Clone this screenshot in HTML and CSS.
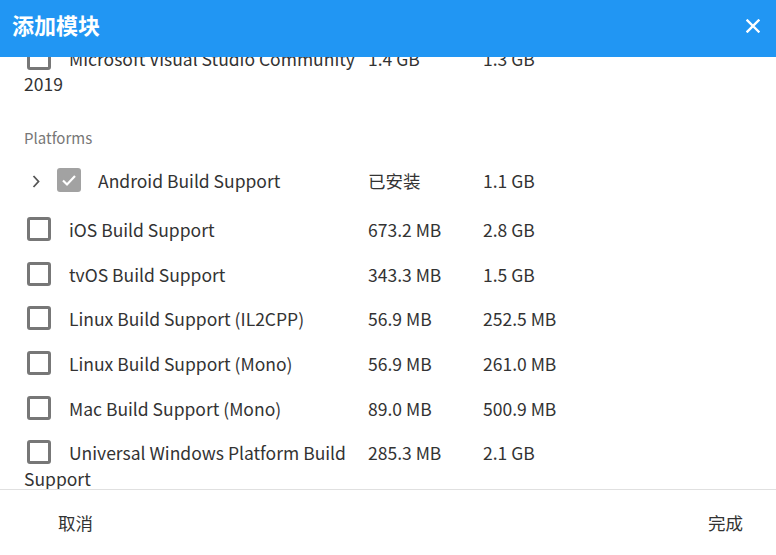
FILE: index.html
```html
<!DOCTYPE html>
<html lang="zh">
<head>
<meta charset="utf-8">
<title>添加模块</title>
<link rel="stylesheet" href="styles.css">
</head>
<body>
<div class="dialog">
  <header class="header">
    <h1 class="title">添加模块</h1>
    <svg class="close" width="14" height="14" viewBox="0 0 14 14"><path d="M1.5 1.5L12.5 12.5M12.5 1.5L1.5 12.5" stroke="#fff" stroke-width="2.4" stroke-linecap="square" fill="none"/></svg>
  </header>
  <main class="content">
    <div class="list">
      <div class="row">
        <div class="label"><span class="box"></span>Microsoft Visual Studio Community 2019</div>
        <div class="size">1.4 GB</div>
        <div class="size">1.3 GB</div>
      </div>
      <div class="section">Platforms</div>
      <div class="row row-expand">
        <div class="label"><svg class="chev" width="24" height="24" viewBox="0 0 24 24"><path d="M9.5 8l5 5.5-5 5.5" stroke="#555" stroke-width="1.8" fill="none"/></svg><span class="box box-checked"><svg width="24" height="24" viewBox="0 0 24 24"><path d="M6 12.5l4 4 8-8.5" stroke="#fff" stroke-width="2.2" fill="none"/></svg></span>Android Build Support</div>
        <div class="size">已安装</div>
        <div class="size">1.1 GB</div>
      </div>
      <div class="row">
        <div class="label"><span class="box"></span>iOS Build Support</div>
        <div class="size">673.2 MB</div>
        <div class="size">2.8 GB</div>
      </div>
      <div class="row">
        <div class="label"><span class="box"></span>tvOS Build Support</div>
        <div class="size">343.3 MB</div>
        <div class="size">1.5 GB</div>
      </div>
      <div class="row">
        <div class="label"><span class="box"></span>Linux Build Support (IL2CPP)</div>
        <div class="size">56.9 MB</div>
        <div class="size">252.5 MB</div>
      </div>
      <div class="row">
        <div class="label"><span class="box"></span>Linux Build Support (Mono)</div>
        <div class="size">56.9 MB</div>
        <div class="size">261.0 MB</div>
      </div>
      <div class="row">
        <div class="label"><span class="box"></span>Mac Build Support (Mono)</div>
        <div class="size">89.0 MB</div>
        <div class="size">500.9 MB</div>
      </div>
      <div class="row">
        <div class="label"><span class="box"></span>Universal Windows Platform Build Support</div>
        <div class="size">285.3 MB</div>
        <div class="size">2.1 GB</div>
      </div>
    </div>
  </main>
  <footer class="footer">
    <button class="btn">取消</button>
    <button class="btn">完成</button>
  </footer>
</div>
</body>
</html>
```
FILE: styles.css
```css
* { box-sizing: border-box; }
html, body {
  margin: 0;
  padding: 0;
  background: #fff;
}
body {
  font-family: "Noto Sans CJK SC", "Noto Sans", sans-serif;
  color: #333;
}
.dialog {
  width: 776px;
  height: 555px;
  display: flex;
  flex-direction: column;
  overflow: hidden;
}
.header {
  height: 57px;
  flex: none;
  background: #2196f3;
  display: flex;
  align-items: center;
  justify-content: space-between;
  padding: 0 16px 0 12px;
  position: relative;
  z-index: 1;
}
.title {
  margin: -9px 0 0;
  font-size: 22px;
  font-weight: 700;
  color: #fff;
  line-height: 30px;
}
.close { display: block; margin-top: -5px; }
.content {
  flex: 1;
  overflow: hidden;
}
.list {
  margin-top: -21px;
}
.row {
  display: flex;
  align-items: flex-start;
  padding: 9.6px 0 9.6px 24px;
  font-size: 17.5px;
  line-height: 25.5px;
}
.row-expand {
  padding-top: 12px;
  padding-bottom: 13.7px;
}
.label {
  width: 344px;
  flex: none;
}
.size {
  width: 115px;
  flex: none;
}
.box {
  display: inline-block;
  width: 24px;
  height: 24px;
  border: 3px solid #777;
  border-radius: 3px;
  margin-left: 3px;
  margin-right: 18px;
  vertical-align: top;
}
.box-checked {
  border: none;
  background: #a2a2a2;
  margin-left: 9px;
  margin-right: 17px;
}
.box-checked svg {
  display: block;
}
.chev {
  display: inline-block;
  vertical-align: top;
}
.section {
  padding: 21px 0 7px 24px;
  font-size: 15px;
  line-height: 22px;
  color: #777;
}
.footer {
  height: 66px;
  flex: none;
  border-top: 1px solid #e0e0e0;
  display: flex;
  align-items: center;
  justify-content: space-between;
  padding: 0 17px 0 42px;
}
.btn {
  background: none;
  border: none;
  font-family: inherit;
  font-size: 17.5px;
  color: #333;
  padding: 6px 16px;
  line-height: 24px;
  margin-top: 0;
}
```
